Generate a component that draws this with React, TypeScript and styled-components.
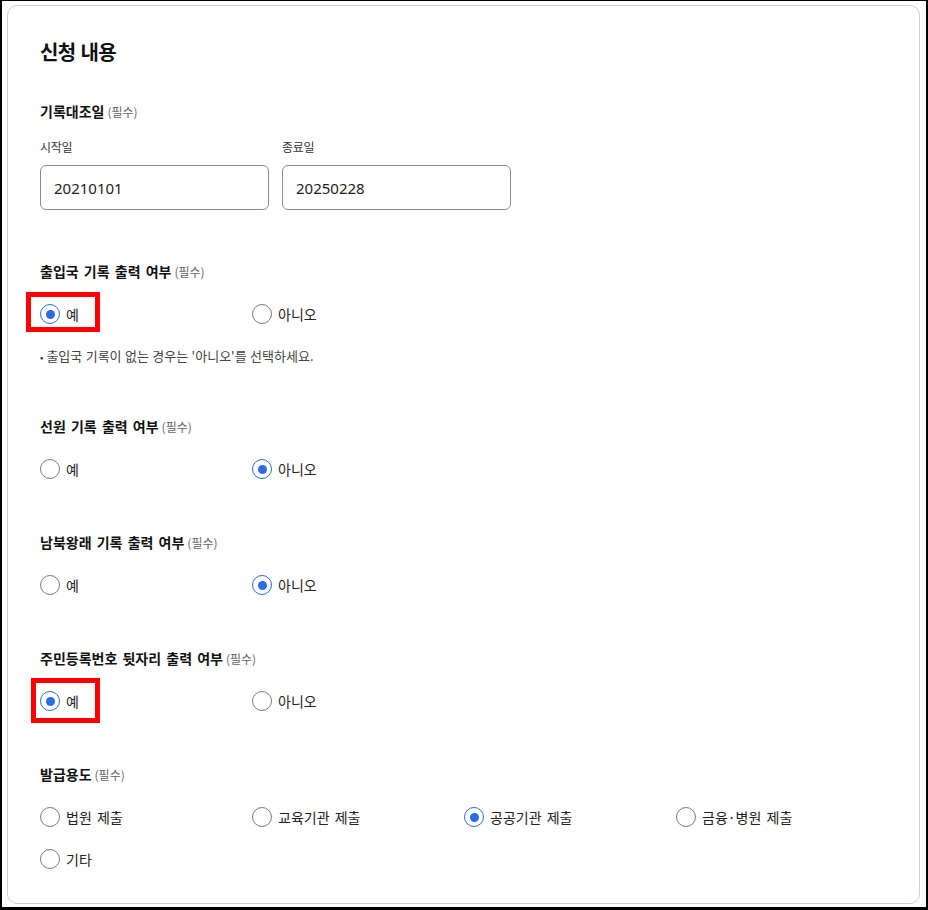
import React from 'react';
import styled, { createGlobalStyle } from 'styled-components';

const GlobalStyle = createGlobalStyle`
  html, body {
    margin: 0;
    padding: 0;
    background: #ffffff;
  }
  body {
    font-family: "Noto Sans CJK KR", "Noto Sans", sans-serif;
    color: #1a1a1a;
  }
  * {
    box-sizing: border-box;
  }
`;

const Frame = styled.div`
  width: 928px;
  border-style: solid;
  border-color: #000;
  border-width: 1px 2px 3px 2px;
  padding: 4px 6px 3px 5px;
`;

const Card = styled.section`
  border: 1px solid #cfcfcf;
  border-radius: 10px;
  padding: 32px 32px 32px 32px;
`;

const Title = styled.h2`
  margin: 0 0 35px 0;
  font-size: 20px;
  line-height: 28px;
  font-weight: 700;
  letter-spacing: -0.6px;
  word-spacing: 1px;
  color: #111;
`;

const Sections = styled.div`
  display: flex;
  flex-direction: column;
  gap: 51px;
`;

const Section = styled.div`
  display: flex;
  flex-direction: column;
`;

const Heading = styled.h3<{ $gap: number }>`
  margin: 0 0 ${(p) => p.$gap}px 0;
  height: 20px;
  font-size: 14px;
  line-height: 20px;
  font-weight: 700;
  word-spacing: 2px;
  color: #111;

  small {
    font-size: 12px;
    line-height: 1;
    font-weight: 400;
    color: #666;
    margin-left: 3px;
  }
`;

const DateRow = styled.div`
  display: flex;
  gap: 13px;
`;

const DateField = styled.div`
  display: flex;
  flex-direction: column;
  gap: 9px;
`;

const FieldLabel = styled.span`
  font-size: 12px;
  line-height: 18px;
  letter-spacing: -0.3px;
  color: #333;
`;

const DateInput = styled.input`
  width: 229px;
  height: 45px;
  margin: 0;
  border: 1px solid #8c8c8c;
  border-radius: 6px;
  padding: 0 13px;
  font-family: "Noto Sans", "Noto Sans CJK KR", sans-serif;
  font-size: 15px;
  color: #222;
  background: #fff;
  outline: none;
`;

const OptionGrid = styled.div`
  display: grid;
  grid-template-columns: repeat(4, 212px);
  row-gap: 18px;
`;

const Option = styled.label`
  position: relative;
  display: flex;
  align-items: center;
  justify-self: start;
  gap: 6px;
  height: 24px;
  font-size: 14px;
  line-height: 24px;
  word-spacing: 2px;
  color: #222;
  cursor: pointer;
`;

const Circle = styled.span<{ $checked: boolean }>`
  width: 20px;
  height: 20px;
  border-radius: 50%;
  border: 1.5px solid ${(p) => (p.$checked ? '#2a6be6' : '#7a7a7a')};
  display: flex;
  align-items: center;
  justify-content: center;
  flex-shrink: 0;

  &::after {
    content: '';
    display: ${(p) => (p.$checked ? 'block' : 'none')};
    width: 9px;
    height: 9px;
    border-radius: 50%;
    background: #2a6be6;
  }
`;

const Highlight = styled.span<{ $left: number; $top: number; $w: number; $h: number }>`
  position: absolute;
  left: ${(p) => p.$left}px;
  top: ${(p) => p.$top}px;
  width: ${(p) => p.$w}px;
  height: ${(p) => p.$h}px;
  border: 5px solid #ff0000;
  pointer-events: none;
`;

const Note = styled.p`
  margin: 21px 0 0 0;
  height: 18px;
  font-size: 13px;
  line-height: 18px;
  word-spacing: 0.5px;
  color: #444;

  &::before {
    content: '•';
    font-size: 10px;
    line-height: 1;
    margin-right: 3px;
    color: #333;
  }
`;

type Box = { left: number; top: number; w: number; h: number };

type RadioSection = {
  title: string;
  options: string[];
  checked: number;
  highlight?: Box;
  note?: string;
};

const sections: RadioSection[] = [
  {
    title: '출입국 기록 출력 여부',
    options: ['예', '아니오'],
    checked: 0,
    highlight: { left: -14, top: -10, w: 74, h: 40 },
    note: "출입국 기록이 없는 경우는 '아니오'를 선택하세요.",
  },
  { title: '선원 기록 출력 여부', options: ['예', '아니오'], checked: 1 },
  { title: '남북왕래 기록 출력 여부', options: ['예', '아니오'], checked: 1 },
  {
    title: '주민등록번호 뒷자리 출력 여부',
    options: ['예', '아니오'],
    checked: 0,
    highlight: { left: -9, top: -11, w: 69, h: 45 },
  },
  {
    title: '발급용도',
    options: ['법원 제출', '교육기관 제출', '공공기관 제출', '금융·병원 제출', '기타'],
    checked: 2,
  },
];

const App: React.FC = (): JSX.Element => {
  return (
    <Frame>
      <GlobalStyle />
      <Card>
        <Title>신청 내용</Title>
        <Sections>
          <Section>
            <Heading $gap={17}>
              기록대조일<small>(필수)</small>
            </Heading>
            <DateRow>
              <DateField>
                <FieldLabel>시작일</FieldLabel>
                <DateInput defaultValue="20210101" />
              </DateField>
              <DateField>
                <FieldLabel>종료일</FieldLabel>
                <DateInput defaultValue="20250228" />
              </DateField>
            </DateRow>
          </Section>
          {sections.map((s) => (
            <Section key={s.title}>
              <Heading $gap={21}>
                {s.title}
                <small>(필수)</small>
              </Heading>
              <OptionGrid>
                {s.options.map((o, i) => (
                  <Option key={o}>
                    <Circle $checked={i === s.checked} />
                    {o}
                    {s.highlight && i === s.checked && (
                      <Highlight
                        $left={s.highlight.left}
                        $top={s.highlight.top}
                        $w={s.highlight.w}
                        $h={s.highlight.h}
                      />
                    )}
                  </Option>
                ))}
              </OptionGrid>
              {s.note && <Note>{s.note}</Note>}
            </Section>
          ))}
        </Sections>
      </Card>
    </Frame>
  );
};

export default App;
